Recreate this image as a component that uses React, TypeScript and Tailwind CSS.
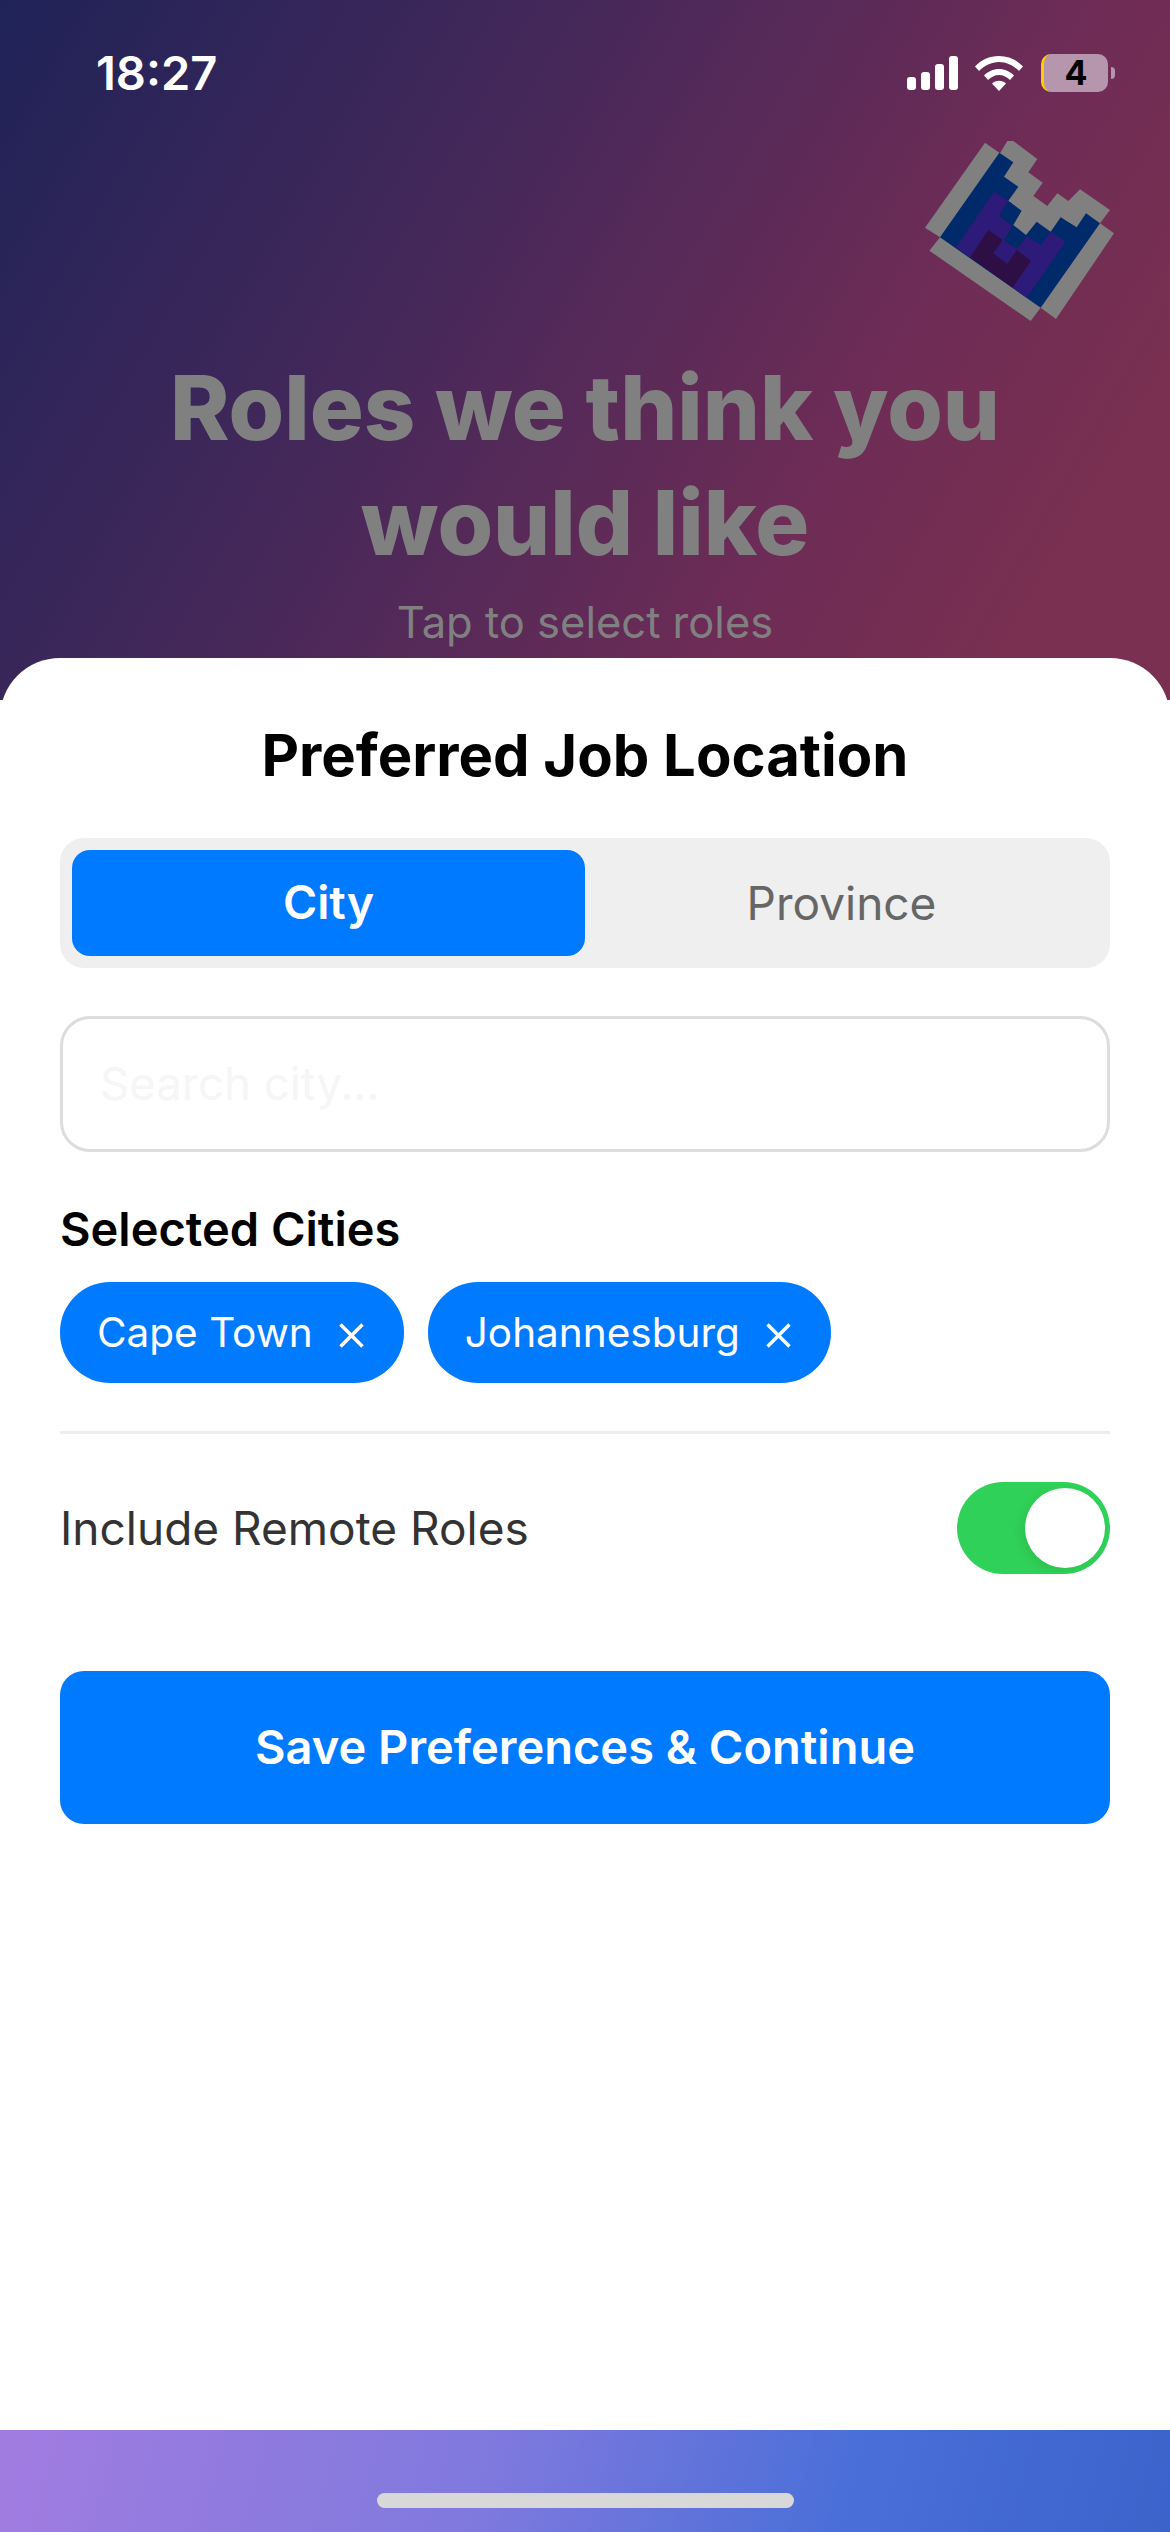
import React from "react";

function Logo() {
  return (
    <svg viewBox="0 0 600 600" className="w-[200px] h-[200px] block">
      <polygon fill="#808080" points="15,293 195,38 240,70 262,33 280,33 352,87 325,127 368,158 340,198 382,228 412,190 445,213 480,178 570,240 540,280 582,310 408,567 362,533 332,573 28,362 60,322" />
      <polygon fill="#002a6a" points="238,68 280,97 252,140 295,170 265,212 305,242 280,285 318,315 350,275 392,305 422,262 470,292 498,250 540,280 362,533 60,322" />
      <polygon fill="#2e1a78" points="222,185 265,212 237,258 277,288 252,330 292,358 320,318 362,345 392,305 437,335 320,503 108,352" />
      <polygon fill="#2e0f45" points="205,300 248,330 220,370 262,402 290,360 333,392 278,473 150,382" />
    </svg>
  );
}

function StatusIcons() {
  return (
    <div className="flex items-center">
      <svg width="51" height="34" viewBox="0 0 51 34" className="block">
        <rect x="0" y="21" width="9" height="13" rx="3" fill="#fff" />
        <rect x="14" y="16" width="9" height="18" rx="3" fill="#fff" />
        <rect x="28" y="8" width="9" height="26" rx="3" fill="#fff" />
        <rect x="42" y="0" width="9" height="34" rx="3" fill="#fff" />
      </svg>
      <svg width="48" height="35" viewBox="0 0 48 35" className="block ml-[17px]">
        <path d="M0 10.5C6 4 14.500 0 24 0s18 4 24 10.500l-4 4.500C38.500 9.500 31.500 6 24 6S9.500 9.500 4 15z" fill="#fff" />
        <path d="M9 19.500C13 15.500 18.300 13 24 13s11 2.500 15 6.500l-4 4.500c-3-3-6.800-5-11-5s-8 2-11 5z" fill="#fff" />
        <path d="M17 27.500c2-1.800 4.400-2.800 7-2.800s5 1 7 2.800L24 35z" fill="#fff" />
      </svg>
      <div className="ml-[18px] w-[67px] h-[38px] rounded-[10px] bg-[#b596ad] flex border-l-[3px] border-[#ffcc00] items-center justify-center">
        <span className="text-[34px] leading-[38px] font-bold text-black">4</span>
      </div>
      <div className="ml-[3px] w-[4px] h-[12px] rounded-r-full bg-[#b596ad]" />
    </div>
  );
}

function XIcon() {
  return (
    <svg width="25" height="25" viewBox="0 0 25 25" className="block mt-[6px]">
      <path d="M1.500 1.500L23.500 23.500M23.500 1.500L1.500 23.500" stroke="#fff" strokeWidth="3.500" fill="none" />
    </svg>
  );
}

function Chip({ label }: { label: string }) {
  return (
    <div className="h-[101px] rounded-[50px] bg-[#007aff] pl-[37px] pr-[40px] flex items-center gap-[26px]">
      <span className="text-[40.500px] leading-[50px] text-white">{label}</span>
      <XIcon />
    </div>
  );
}

export default function App() {
  return (
    <div className="w-[1170px] h-[2532px] flex flex-col overflow-hidden bg-white font-['Inter','Liberation_Sans',sans-serif]">
      <div className="h-[700px] -mb-[42px] shrink-0 bg-[linear-gradient(120deg,#1f2358_0%,#45285a_37%,#6e2c56_70%,#7a3050_90%)]">
        <div className="pl-[96px] pr-[55px] pt-[48px] flex items-center justify-between">
          <span className="text-[47px] leading-[50px] font-semibold text-white">18:27</span>
          <StatusIcons />
        </div>
        <div className="flex justify-end pr-[50px] mt-[32px]">
          <Logo />
        </div>
        <h1 className="mt-[20px] text-center text-[90px] leading-[115px] font-extrabold text-[#808080]">
          Roles we think you
          <br />
          would like
        </h1>
        <p className="mt-[17px] text-center text-[43.500px] leading-[50px] text-[#808080]">Tap to select roles</p>
      </div>

      <div className="relative flex-1 bg-white rounded-t-[60px] px-[60px] pt-[58px]">
        <h2 className="text-center text-[58px] leading-[78px] font-bold text-black">Preferred Job Location</h2>
        <div className="mt-[44px] h-[130px] rounded-[24px] bg-[#efefef] p-[12px] flex">
          <div className="flex-1 rounded-[18px] bg-[#007aff] flex items-center justify-center text-[46.500px] font-semibold text-white">City</div>
          <div className="flex-1 flex items-center justify-center text-[46px] text-[#666666]">Province</div>
        </div>
        <div className="mt-[48px] h-[136px] rounded-[30px] border-[3px] border-[#dddddd] px-[37px] flex items-center">
          <span className="text-[45.500px] text-[#f6f6f6]">Search city...</span>
        </div>
        <div className="mt-[48px] text-[47px] leading-[58px] font-semibold text-black">Selected Cities</div>
        <div className="mt-[24px] flex gap-[24px]">
          <Chip label="Cape Town" />
          <Chip label="Johannesburg" />
        </div>
        <div className="mt-[48px] h-[3px] bg-[#eeeeee]" />
        <div className="mt-[48px] flex items-center justify-between">
          <span className="text-[46px] text-[#333333]">Include Remote Roles</span>
          <div className="w-[153px] h-[92px] rounded-[46px] bg-[#30d158] flex items-center justify-end pr-[5px]">
            <div className="w-[80px] h-[80px] rounded-full bg-white shadow-[-4px_3px_10px_rgba(0,0,0,0.08)]" />
          </div>
        </div>
        <button className="mt-[97px] w-full h-[153px] rounded-[24px] bg-[#007aff] text-[47px] font-semibold text-white">
          Save Preferences &amp; Continue
        </button>
      </div>

      <div className="h-[102px] shrink-0 flex items-end justify-center pb-[24px] bg-[linear-gradient(105deg,#a17ce0_0%,#7f79de_42%,#4a6fd8_72%,#3b63ca_100%)]">
        <div className="w-[417px] h-[15px] rounded-full bg-[#d8d8d8]" />
      </div>
    </div>
  );
}
